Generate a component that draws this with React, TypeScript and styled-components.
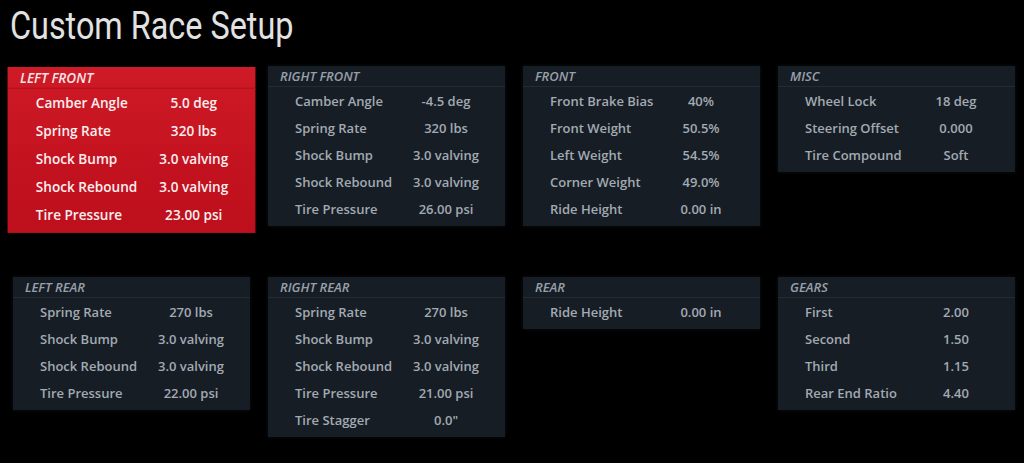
import React from "react";
import styled, { createGlobalStyle, css } from "styled-components";

const GlobalStyle = createGlobalStyle`
  html, body { margin: 0; padding: 0; background: #000; }
  body { font-family: "Open Sans", "Noto Sans", sans-serif; }
`;

const Page = styled.div`
  width: 1024px;
  height: 463px;
  background: #000;
  overflow: hidden;
`;

const Title = styled.h1`
  margin: 0;
  height: 64px;
  padding: 3px 0 0 10px;
  box-sizing: border-box;
  height: 66px;
  font-family: "Roboto", "Liberation Sans", sans-serif;
  font-weight: 400;
  font-size: 39px;
  line-height: 46px;
  color: #e2e2e2;
  transform: scaleX(0.83);
  transform-origin: 10px 0;
  white-space: nowrap;
`;

const Grid = styled.div`
  display: grid;
  grid-template-columns: repeat(4, 237px);
  grid-template-rows: 211px auto;
  column-gap: 18px;
  padding-left: 13px;
  align-items: start;
`;

const Panel = styled.div<{ $active?: boolean }>`
  background: #171d25;
  box-shadow: 0 0 4px rgba(40, 50, 60, 0.35);
  padding-bottom: 4px;
  ${(p) =>
    p.$active &&
    css`
      background: linear-gradient(180deg, #cf1a27 0%, #c3121f 60%, #bd101c 100%);
      transform: translateY(1px) scale(1.046, 1.037);
      transform-origin: 50% 0;
      box-shadow: 0 0 6px rgba(0, 0, 0, 0.6);
      position: relative;
      z-index: 1;
    `}
`;

const Header = styled.div<{ $active?: boolean }>`
  height: 20px;
  border-bottom: 1px solid ${(p) => (p.$active ? "#b00f1b" : "#232b34")};
  padding-left: 12px;
  font-style: italic;
  font-weight: 600;
  font-size: 13px;
  line-height: 21px;
  text-transform: uppercase;
  color: ${(p) => (p.$active ? "#f3e6e7" : "#97a0aa")};
`;

const Row = styled.div<{ $active?: boolean }>`
  display: grid;
  grid-template-columns: 113px 76px;
  padding-left: 27px;
  height: 27px;
  align-items: center;
  font-size: 13px;
  font-weight: 600;
  color: ${(p) => (p.$active ? "#fbeff0" : "#a2aab2")};
  white-space: nowrap;
`;

const Label = styled.span``;

const Value = styled.span`
  text-align: center;
`;

type Item = [string, string];
type PanelData = { title: string; items: Item[]; active?: boolean };

const panels: PanelData[] = [
  {
    title: "Left Front",
    active: true,
    items: [
      ["Camber Angle", "5.0 deg"],
      ["Spring Rate", "320 lbs"],
      ["Shock Bump", "3.0 valving"],
      ["Shock Rebound", "3.0 valving"],
      ["Tire Pressure", "23.00 psi"],
    ],
  },
  {
    title: "Right Front",
    items: [
      ["Camber Angle", "-4.5 deg"],
      ["Spring Rate", "320 lbs"],
      ["Shock Bump", "3.0 valving"],
      ["Shock Rebound", "3.0 valving"],
      ["Tire Pressure", "26.00 psi"],
    ],
  },
  {
    title: "Front",
    items: [
      ["Front Brake Bias", "40%"],
      ["Front Weight", "50.5%"],
      ["Left Weight", "54.5%"],
      ["Corner Weight", "49.0%"],
      ["Ride Height", "0.00 in"],
    ],
  },
  {
    title: "Misc",
    items: [
      ["Wheel Lock", "18 deg"],
      ["Steering Offset", "0.000"],
      ["Tire Compound", "Soft"],
    ],
  },
  {
    title: "Left Rear",
    items: [
      ["Spring Rate", "270 lbs"],
      ["Shock Bump", "3.0 valving"],
      ["Shock Rebound", "3.0 valving"],
      ["Tire Pressure", "22.00 psi"],
    ],
  },
  {
    title: "Right Rear",
    items: [
      ["Spring Rate", "270 lbs"],
      ["Shock Bump", "3.0 valving"],
      ["Shock Rebound", "3.0 valving"],
      ["Tire Pressure", "21.00 psi"],
      ["Tire Stagger", "0.0\""],
    ],
  },
  {
    title: "Rear",
    items: [["Ride Height", "0.00 in"]],
  },
  {
    title: "Gears",
    items: [
      ["First", "2.00"],
      ["Second", "1.50"],
      ["Third", "1.15"],
      ["Rear End Ratio", "4.40"],
    ],
  },
];

export default function App() {
  return (
    <Page>
      <GlobalStyle />
      <Title>Custom Race Setup</Title>
      <Grid>
        {panels.map((p) => (
          <Panel key={p.title} $active={p.active}>
            <Header $active={p.active}>{p.title}</Header>
            {p.items.map(([l, v]) => (
              <Row key={l} $active={p.active}>
                <Label>{l}</Label>
                <Value>{v}</Value>
              </Row>
            ))}
          </Panel>
        ))}
      </Grid>
    </Page>
  );
}
